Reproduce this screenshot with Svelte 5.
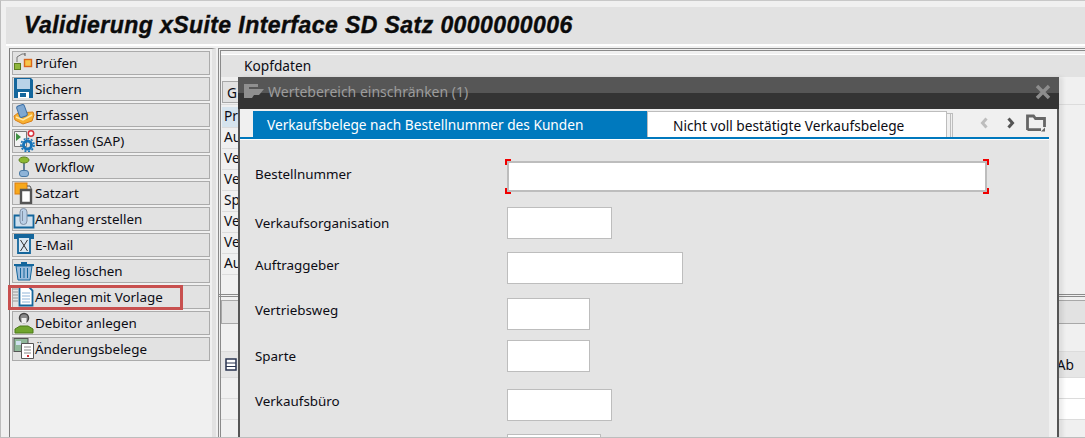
<script>
  const acciones = [
    { id: 'pruefen', texto: 'Prüfen' },
    { id: 'sichern', texto: 'Sichern' },
    { id: 'erfassen', texto: 'Erfassen' },
    { id: 'sap', texto: 'Erfassen (SAP)' },
    { id: 'workflow', texto: 'Workflow' },
    { id: 'satzart', texto: 'Satzart' },
    { id: 'anhang', texto: 'Anhang erstellen' },
    { id: 'mail', texto: 'E-Mail' },
    { id: 'loeschen', texto: 'Beleg löschen' },
    { id: 'vorlage', texto: 'Anlegen mit Vorlage' },
    { id: 'debitor', texto: 'Debitor anlegen' },
    { id: 'aenderung', texto: 'Änderungsbelege' }
  ];

  const kopf = ['Pr', 'Au', 'Ve', 'Ve', 'Sp', 'Ve', 'Ve', 'Au'];

  // ancho del campo, espacio sobre la fila y bajada del texto: en SAP no son regulares
  const campos = [
    { texto: 'Bestellnummer', ancho: 480, sobre: 0, alto: 31, bajada: 3 },
    { texto: 'Verkaufsorganisation', ancho: 105, sobre: 15, alto: 32, bajada: 6 },
    { texto: 'Auftraggeber', ancho: 176, sobre: 13, alto: 32, bajada: 3 },
    { texto: 'Vertriebsweg', ancho: 83, sobre: 14, alto: 32, bajada: 2 },
    { texto: 'Sparte', ancho: 83, sobre: 10, alto: 32, bajada: 6 },
    { texto: 'Verkaufsbüro', ancho: 105, sobre: 17, alto: 32, bajada: 2 },
    { texto: '', ancho: 94, sobre: 13, alto: 32, bajada: 2 }
  ];
</script>

<div class="pagina">
  <header class="titulo">
    <h1>Validierung xSuite Interface SD Satz 0000000006</h1>
  </header>

  <div class="cuerpo">
    <aside class="lateral">
      {#each acciones as accion}
        <button class="accion">
          <span class="icono">
            <svg viewBox="0 0 22 22" width="22" height="22">
              {#if accion.id === 'pruefen'}
                <path d="M4 10V5l5-3h3" fill="none" stroke="#777" stroke-width="1" />
                <path d="M12 1v3" stroke="#555" />
                <rect x="1.5" y="11.5" width="6" height="6" fill="#8fb63c" stroke="#5d7d20" />
                <rect x="11.5" y="7.5" width="7" height="7" fill="#f7c64a" stroke="#d9661c" stroke-width="1.4" />
              {:else if accion.id === 'sichern'}
                <path d="M1 0h17l2 2v18H1z" fill="#14669c" />
                <rect x="4" y="1" width="13" height="10" fill="#b9d3e8" />
                <rect x="5" y="14" width="11" height="6" fill="#fff" />
                <rect x="7" y="15" width="6" height="4" fill="#14669c" />
              {:else if accion.id === 'erfassen'}
                <path d="M1 12l4-3 15-1 1 3-2 6-9 3-8-4z" fill="#f7b132" stroke="#d9801a" />
                <path d="M3 13l7 3 9-5" fill="none" stroke="#ffe7a8" stroke-width="1.5" />
                <rect x="5" y="1" width="8" height="12" rx="2" transform="rotate(-20 9 7)" fill="#7fa8d2" stroke="#3a6ea5" />
              {:else if accion.id === 'sap'}
                <path d="M1.5 1.5h12v15h-12z" fill="#f2f2f2" stroke="#777" />
                <path d="M3 3l5 4-5 4z" fill="#3f9142" />
                <circle cx="14.500" cy="15" r="4" fill="none" stroke="#1673b8" stroke-width="3" />
                <circle cx="14.500" cy="15" r="6.500" fill="none" stroke="#1673b8" stroke-width="1.600" stroke-dasharray="2 1.700" />
                <circle cx="18" cy="3.500" r="2.700" fill="#fff" stroke="#d6303a" stroke-width="1.500" />
              {:else if accion.id === 'workflow'}
                <path d="M11 7v7" stroke="#3b5f80" stroke-width="1.500" />
                <ellipse cx="11" cy="4" rx="5" ry="3" fill="#8cb832" stroke="#5f8221" />
                <rect x="6.500" y="14.500" width="9" height="6" rx="2.500" fill="#8fb4d8" stroke="#4a7aa5" />
              {:else if accion.id === 'satzart'}
                <rect x="2" y="1" width="12" height="11" fill="#f6a81c" stroke="#de7f10" />
                <path d="M8 8h10v13H8z" fill="#fff" stroke="#555" stroke-width="2.400" />
                <path d="M14 4h3l1 2v2" fill="none" stroke="#555" />
              {:else if accion.id === 'anhang'}
                <path d="M1.500 7.500h19v12h-19z" fill="#cfe0ee" stroke="#14669c" stroke-width="1.800" />
                <rect x="7" y="0.500" width="7" height="16" rx="3.500" fill="#b9cfe6" stroke="#8191a6" />
                <path d="M9.500 3v10" stroke="#8191a6" />
              {:else if accion.id === 'mail'}
                <rect x="1" y="0" width="20" height="5" fill="#14669c" />
                <path d="M5 3h12v16H5z" fill="#dbe8f2" stroke="#14669c" stroke-width="1.800" />
                <path d="M7.500 6l7 11M14.500 6l-7 11" stroke="#333" stroke-width="1" fill="none" />
              {:else if accion.id === 'loeschen'}
                <path d="M1 5h20" stroke="#14669c" stroke-width="2" />
                <path d="M8 3h6" stroke="#14669c" stroke-width="2" />
                <path d="M3 6h16l-2 14H5z" fill="#9bbcdc" stroke="#14669c" />
                <path d="M7.500 8v10M11 8v10M14.500 8v10" stroke="#14669c" />
              {:else if accion.id === 'vorlage'}
                <path d="M0 3h5M0 6h5M0 9h5M0 12h5M0 15h5" stroke="#999" fill="none" />
                <path d="M6.500 0.500h9l4 4v15h-13z" fill="#fff" stroke="#14669c" stroke-width="1.800" />
                <path d="M9 7h8M9 10h8M9 13h8M9 16h8" stroke="#8fb4d8" />
              {:else if accion.id === 'debitor'}
                <path d="M2 21v-4l5-3h8l5 3v4z" fill="#6fa52d" stroke="#4d7a19" />
                <circle cx="11" cy="6" r="4.500" fill="#8a8a8a" stroke="#444" stroke-width="1.500" />
                <path d="M8.500 6h5v5h-5z" fill="#efefef" />
              {:else if accion.id === 'aenderung'}
                <rect x="1" y="0.500" width="14" height="13" fill="#8fb89a" stroke="#555" />
                <rect x="3" y="3" width="5" height="4" fill="#cfe0ee" />
                <path d="M8.500 5.500h12v15h-12z" fill="#fff" stroke="#555" />
                <path d="M11 9h7M11 12h7M11 15h7" stroke="#888" />
                <rect x="14" y="17" width="2" height="2" fill="#d6303a" />
              {/if}
            </svg>
          </span>
          <span>{accion.texto}</span>
          {#if accion.id === 'vorlage'}
            <span class="marca"></span>
          {/if}
        </button>
      {/each}
    </aside>

    <main class="principal">
      <section class="bloque-kopf">
        <div class="barra kopfdaten">Kopfdaten</div>
        <div class="linea-pestana">
          <div class="pestana">G</div>
        </div>
        <div class="filas">
          {#each kopf as fila, i}
            <div class="fila" class:activa={i === 0}>{fila}</div>
          {/each}
        </div>
      </section>
      <section class="bloque-pos">
        <div class="barra"></div>
        <div class="fila-pos"></div>
        <div class="fila-pos cabecera">
          <svg viewBox="0 0 14 14" width="14" height="14">
            <path d="M1 1h10v11H1z" fill="#fff" stroke="#2a3550" stroke-width="1.500" />
            <path d="M1 5h10M1 8.500h10" stroke="#2a3550" />
          </svg>
          <span class="ab">Ab</span>
        </div>
        <div class="fila-pos blanca"></div>
        <div class="fila-pos blanca"></div>
      </section>
    </main>
  </div>

  <div class="dialogo">
    <div class="dialogo-cabecera">
      <svg class="dialogo-icono" viewBox="0 0 20 16" width="20" height="16">
        <path d="M0 1h14v3H5v8h5l-2 3H0z" fill="#8f8f8f" />
        <path d="M5 6h15l-5 6H5z" fill="#8f8f8f" />
      </svg>
      <span>Wertebereich einschränken (1)</span>
      <svg class="cerrar" viewBox="0 0 16 16" width="16" height="16">
        <path d="M2 2l12 12M14 2L2 14" stroke="#8d8d8d" stroke-width="3.500" />
      </svg>
    </div>

    <div class="dialogo-contenido">
      <div class="tabs">
        <div class="tab activo">Verkaufsbelege nach Bestellnummer des Kunden</div>
        <div class="tab">Nicht voll bestätigte Verkaufsbelege</div>
        <div class="pila"></div>
        <div class="tab-botones">
          <svg viewBox="0 0 10 12" width="10" height="12"><path d="M7.500 1.500L3.500 6l4 4.500" fill="none" stroke="#bdbdbd" stroke-width="3" /></svg>
          <svg viewBox="0 0 10 12" width="10" height="12"><path d="M2.500 1.500l4 4.500-4 4.500" fill="none" stroke="#555" stroke-width="3" /></svg>
          <svg viewBox="0 0 20 18" width="20" height="18">
            <path d="M1.500 16V2h6l2 2.500h9V13M15 15.700H1.500" fill="none" stroke="#666" stroke-width="2.800" />
            <path d="M19 13.500v4h-4z" fill="#666" />
          </svg>
        </div>
      </div>
      <div class="formulario">
        {#each campos as campo, i}
          <div class="campo" style="margin-top: {campo.sobre}px">
            <label for="campo-{i}" style="margin-top: {campo.bajada}px">{campo.texto}</label>
            <div class="entrada" class:foco={i === 0}>
              <input id="campo-{i}" style="width: {campo.ancho}px; height: {campo.alto}px" />
              {#if i === 0}
                <i class="esq a"></i><i class="esq b"></i><i class="esq c"></i><i class="esq d"></i>
              {/if}
            </div>
          </div>
        {/each}
      </div>
    </div>
  </div>
</div>

<style>
  :global(body) {
    margin: 0;
    background: #f0f0f0;
    font-family: "Noto Sans", sans-serif;
    color: #0c0c14;
    overflow: hidden;
  }

  .pagina {
    position: relative;
    box-sizing: border-box;
    width: 1085px;
    height: 438px;
    overflow: hidden;
    padding: 6px 0 0 6px;
    background: #f0f0f0;
    border-top: 1px solid #c8c8c8;
    border-left: 1px solid #bdbdbd;
    border-bottom: 1px solid #bdbdbd;
    font-size: 13.7px;
  }

  .titulo {
    height: 37px;
    background: #e2e2e2;
    border-bottom: 2px solid #fff;
    display: flex;
    align-items: center;
    margin-left: -1px;
  }

  .titulo h1 {
    margin: 0 0 0 18px;
    font: italic bold 23px "Liberation Sans", sans-serif;
    color: #0b0b0b;
    letter-spacing: 0.43px;
    -webkit-text-stroke: 0.4px #0b0b0b;
    white-space: nowrap;
  }

  .cuerpo {
    display: flex;
    margin: 2px 0 0 2px;
  }

  .lateral {
    box-sizing: border-box;
    width: 207px;
    height: 389px;
    padding: 2px 0 0 2px;
    border-left: 1px solid #7d7d7d;
    border-top: 1px solid #8c8c8c;
    border-right: 4px solid #e2e2e2;
    display: flex;
    flex-direction: column;
    gap: 2px;
    flex-shrink: 0;
    font-size: 13.4px;
  }

  .accion {
    position: relative;
    box-sizing: border-box;
    width: 198px;
    height: 24px;
    padding: 0;
    display: flex;
    align-items: center;
    background: #e2e2e2;
    border: 1px solid #ababab;
    font: inherit;
    color: inherit;
    text-align: left;
  }

  .icono {
    width: 22px;
    height: 22px;
    flex-shrink: 0;
  }

  .marca {
    position: absolute;
    left: -5px;
    top: -1px;
    width: 169px;
    height: 19px;
    border: 3px solid #c8504f;
  }

  .principal {
    flex: 1;
    margin-left: 2px;
    border-left: 3px double #8a8a8a;
    border-top: 3px double #8a8a8a;
    padding-top: 3px;
    min-width: 0;
  }

  .bloque-kopf {
    height: 240px;
  }

  .barra {
    height: 22px;
    background: #e2e2e2;
    border-top: 1px solid #fff;
  }

  .kopfdaten {
    line-height: 22px;
    padding-left: 23px;
  }

  .linea-pestana {
    height: 28px;
    padding-top: 4px;
    box-sizing: border-box;
    border-bottom: 1px solid #dcdcdc;
  }

  .pestana {
    box-sizing: border-box;
    width: 40px;
    height: 22px;
    margin-left: 1px;
    padding-left: 4px;
    background: #e2e2e2;
    border: 1px solid #a8a8a8;
    line-height: 21px;
  }

  .filas {
    margin-top: 2px;
    width: 100px;
    margin-left: 1px;
  }

  .fila {
    box-sizing: border-box;
    height: 21px;
    padding-left: 2px;
    line-height: 18px;
    border-bottom: 1px solid #dcdcdc;
  }

  .fila.activa {
    background: #d6e4ee;
  }

  .bloque-pos {
    margin-left: -3px;
    padding-left: 3px;
    border-top: 3px double #8a8a8a;
    padding-top: 3px;
  }

  .fila-pos {
    box-sizing: border-box;
    height: 21px;
    border-bottom: 1px solid #dcdcdc;
    display: flex;
    align-items: center;
    justify-content: space-between;
    padding: 0 0 0 4px;
  }

  .bloque-pos .barra {
    height: 24px;
    border: 1px solid #a8a8a8;
    border-right: none;
    box-sizing: border-box;
  }

  .bloque-pos .fila-pos:nth-child(2) {
    height: 28px;
  }

  .cabecera {
    height: 26px;
    background: #e6e6e6;
  }

  .ab {
    margin-right: 11px;
  }

  .blanca {
    background: linear-gradient(90deg, #f0f0f0 0 820px, #fff 820px);
  }

  .dialogo {
    position: absolute;
    left: 237px;
    top: 76px;
    width: 821px;
    height: 370px;
    border-left: 2px solid #555;
    border-right: 2px solid #555;
    box-sizing: border-box;
    background: #f0f0f0;
    box-shadow: 4px 0 4px rgba(0, 0, 0, 0.08);
  }

  .dialogo-cabecera {
    height: 32px;
    background: linear-gradient(#565656 0 16px, #343434 16px);
    color: #9c9c9c;
    display: flex;
    align-items: center;
    gap: 4px;
    padding: 0 8px 4px 6px;
    box-sizing: border-box;
    font-size: 14px;
    margin: 0 -2px;
  }

  .dialogo-icono {
    flex-shrink: 0;
  }

  .cerrar {
    margin-left: auto;
    margin-top: 2px;
  }

  .dialogo-contenido {
    padding-right: 8px;
  }

  .tabs {
    display: flex;
    height: 28px;
    padding-left: 13px;
    border-bottom: 2px solid #0078bd;
    box-sizing: content-box;
  }

  .tab {
    box-sizing: border-box;
    height: 26px;
    margin-top: 2px;
    line-height: 28px;
    white-space: nowrap;
  }

  .tab.activo {
    width: 394px;
    padding-left: 14px;
    background: #0079be;
    color: #fff;
  }

  .tab:not(.activo) {
    width: 300px;
    padding-left: 25px;
    background: #fff;
    border: 1px solid #bdbdbd;
    border-bottom: none;
  }

  .pila {
    width: 6px;
    height: 24px;
    margin-top: 4px;
    border: 1px solid #bdbdbd;
    border-left: none;
    border-bottom: none;
    box-sizing: border-box;
    background: linear-gradient(90deg, transparent 3px, #bdbdbd 3px, #bdbdbd 4px, transparent 4px);
  }

  .tab-botones {
    display: flex;
    align-items: center;
    margin-left: 26px;
    gap: 17px;
  }

  .tab-botones svg:last-child {
    margin-left: -7px;
  }

  .formulario {
    height: 300px;
    padding: 21px 0 0 15px;
    background: #e4e4e4;
    border-top: 1px solid #fff;
    box-sizing: border-box;
    font-size: 13.4px;
  }

  .campo {
    display: flex;
    align-items: flex-start;
  }

  .campo label {
    width: 252px;
    flex-shrink: 0;
    line-height: 20px;
  }

  .entrada {
    position: relative;
    display: flex;
  }

  input {
    box-sizing: border-box;
    margin: 0;
    padding: 0;
    background: #fff;
    border: 1px solid #bdbdbd;
    outline: none;
  }

  .foco input {
    border-width: 2px;
  }

  .esq {
    position: absolute;
    width: 4px;
    height: 4px;
    border: 0 solid #f00000;
  }

  .esq.a { left: -2px; top: -2px; border-width: 2px 0 0 2px; }
  .esq.b { right: -2px; top: -2px; border-width: 2px 2px 0 0; }
  .esq.c { left: -2px; bottom: -2px; border-width: 0 0 2px 2px; }
  .esq.d { right: -2px; bottom: -2px; border-width: 0 2px 2px 0; }
</style>
